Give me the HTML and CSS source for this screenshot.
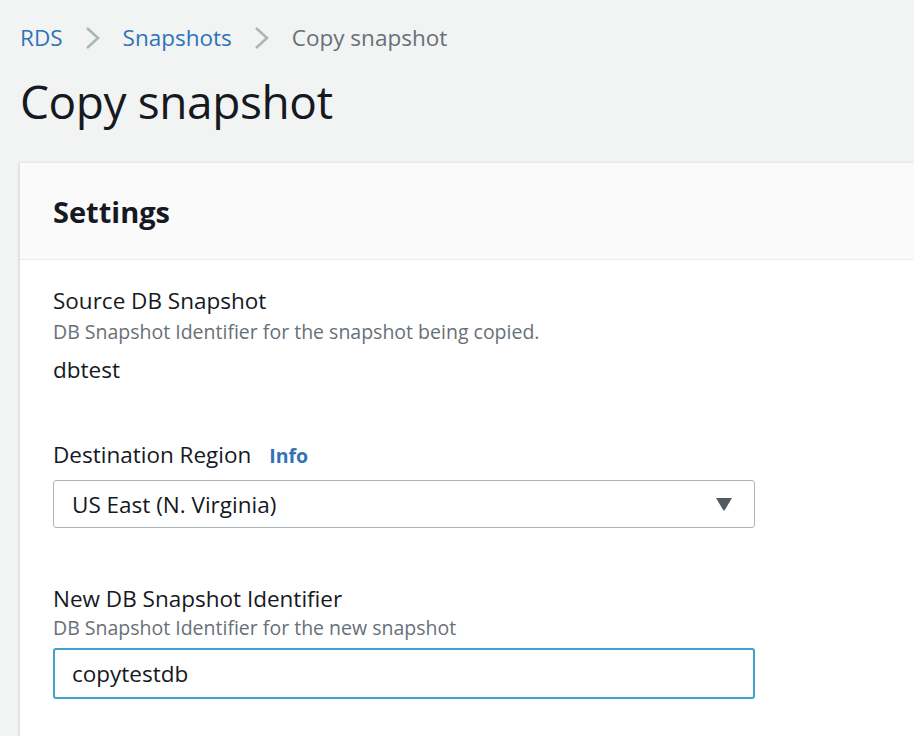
FILE: index.html
```html
<!DOCTYPE html>
<html>
<head>
<meta charset="utf-8">
<link rel="stylesheet" href="styles.css">
</head>
<body>
<div class="page">
  <nav class="crumbs">
    <a class="crumb-link">RDS</a>
    <svg class="chev" width="16" height="24" viewBox="0 0 16 24"><path d="M2 2 L13 12 L2 22" fill="none" stroke="#aab7b8" stroke-width="2.6"/></svg>
    <a class="crumb-link">Snapshots</a>
    <svg class="chev" width="16" height="24" viewBox="0 0 16 24"><path d="M2 2 L13 12 L2 22" fill="none" stroke="#aab7b8" stroke-width="2.6"/></svg>
    <span class="crumb-current">Copy snapshot</span>
  </nav>
  <h1 class="title">Copy snapshot</h1>
  <section class="card">
    <header class="card-head"><h2>Settings</h2></header>
    <div class="card-body">
      <div class="field">
        <div class="label">Source DB Snapshot</div>
        <div class="desc">DB Snapshot Identifier for the snapshot being copied.</div>
        <div class="value">dbtest</div>
      </div>
      <div class="field f2">
        <div class="label">Destination Region <span class="info">Info</span></div>
        <div class="select">
          <span>US East (N. Virginia)</span>
          <svg width="18" height="14" viewBox="0 0 18 14"><path d="M1 1 H17 L9.8 13 Q9 14 8.2 13 Z" fill="#545b64"/></svg>
        </div>
      </div>
      <div class="field f3">
        <div class="label">New DB Snapshot Identifier</div>
        <div class="desc desc2">DB Snapshot Identifier for the new snapshot</div>
        <div class="input">copytestdb</div>
      </div>
    </div>
  </section>
</div>
</body>
</html>
```
FILE: styles.css
```css
html, body { margin: 0; padding: 0; }
body {
  background: #f2f3f3;
  font-family: "Open Sans", "Noto Sans", sans-serif;
  color: #16191f;
  overflow: hidden;
  height: 736px;
}
.page { padding-left: 20px; }
.crumbs {
  display: flex;
  align-items: center;
  height: 30px;
  padding-top: 23px;
  font-size: 22.5px;
  line-height: 30px;
}
.crumb-link { color: #2f73b8; }
.chev { margin: 0 22px 0 22px; }
.crumb-current { color: #687078; }
.title {
  margin: 18px 0 0 0;
  font-size: 46px;
  font-weight: 400;
  line-height: 60px;
  letter-spacing: -0.4px;
}
.card {
  margin-top: 31px;
  background: #fff;
  border-left: 1px solid #e1e4e4;
  border-top: 1px solid #e6eaea;
  box-shadow: 0 1px 2px rgba(0,28,36,.2);
  margin-left: -1px;
}
.card-head {
  background: #fafafa;
  height: 96px;
  border-bottom: 1px solid #e9ebed;
  display: flex;
  align-items: center;
  padding-left: 33px;
}
.card-head h2 {
  margin: 0;
  font-size: 29px;
  font-weight: 700;
}
.card-body { padding: 26px 0 40px 33px; }
.label { font-size: 22.5px; line-height: 30px; }
.desc { font-size: 19.5px; line-height: 26px; color: #687078; margin-top: 3px; }
.desc2 { margin-top: 1px; }
.value { font-size: 22.5px; line-height: 30px; margin-top: 10px; }
.f2 { margin-top: 55px; }
.f3 { margin-top: 56px; }
.info { color: #2f73b8; font-weight: 700; font-size: 19.5px; margin-left: 12px; }
.select, .input {
  width: 702px;
  box-sizing: border-box;
  height: 48px;
  display: flex;
  align-items: center;
  justify-content: space-between;
  padding: 0 21px 0 18px;
  border: 1px solid #aab7b8;
  border-radius: 3px;
  font-size: 22.5px;
  background: #fff;
  margin-top: 9px;
}
.input {
  border: 2px solid #44a0cc;
  height: 51px;
  padding-left: 17px;
  margin-top: 7px;
}
```
